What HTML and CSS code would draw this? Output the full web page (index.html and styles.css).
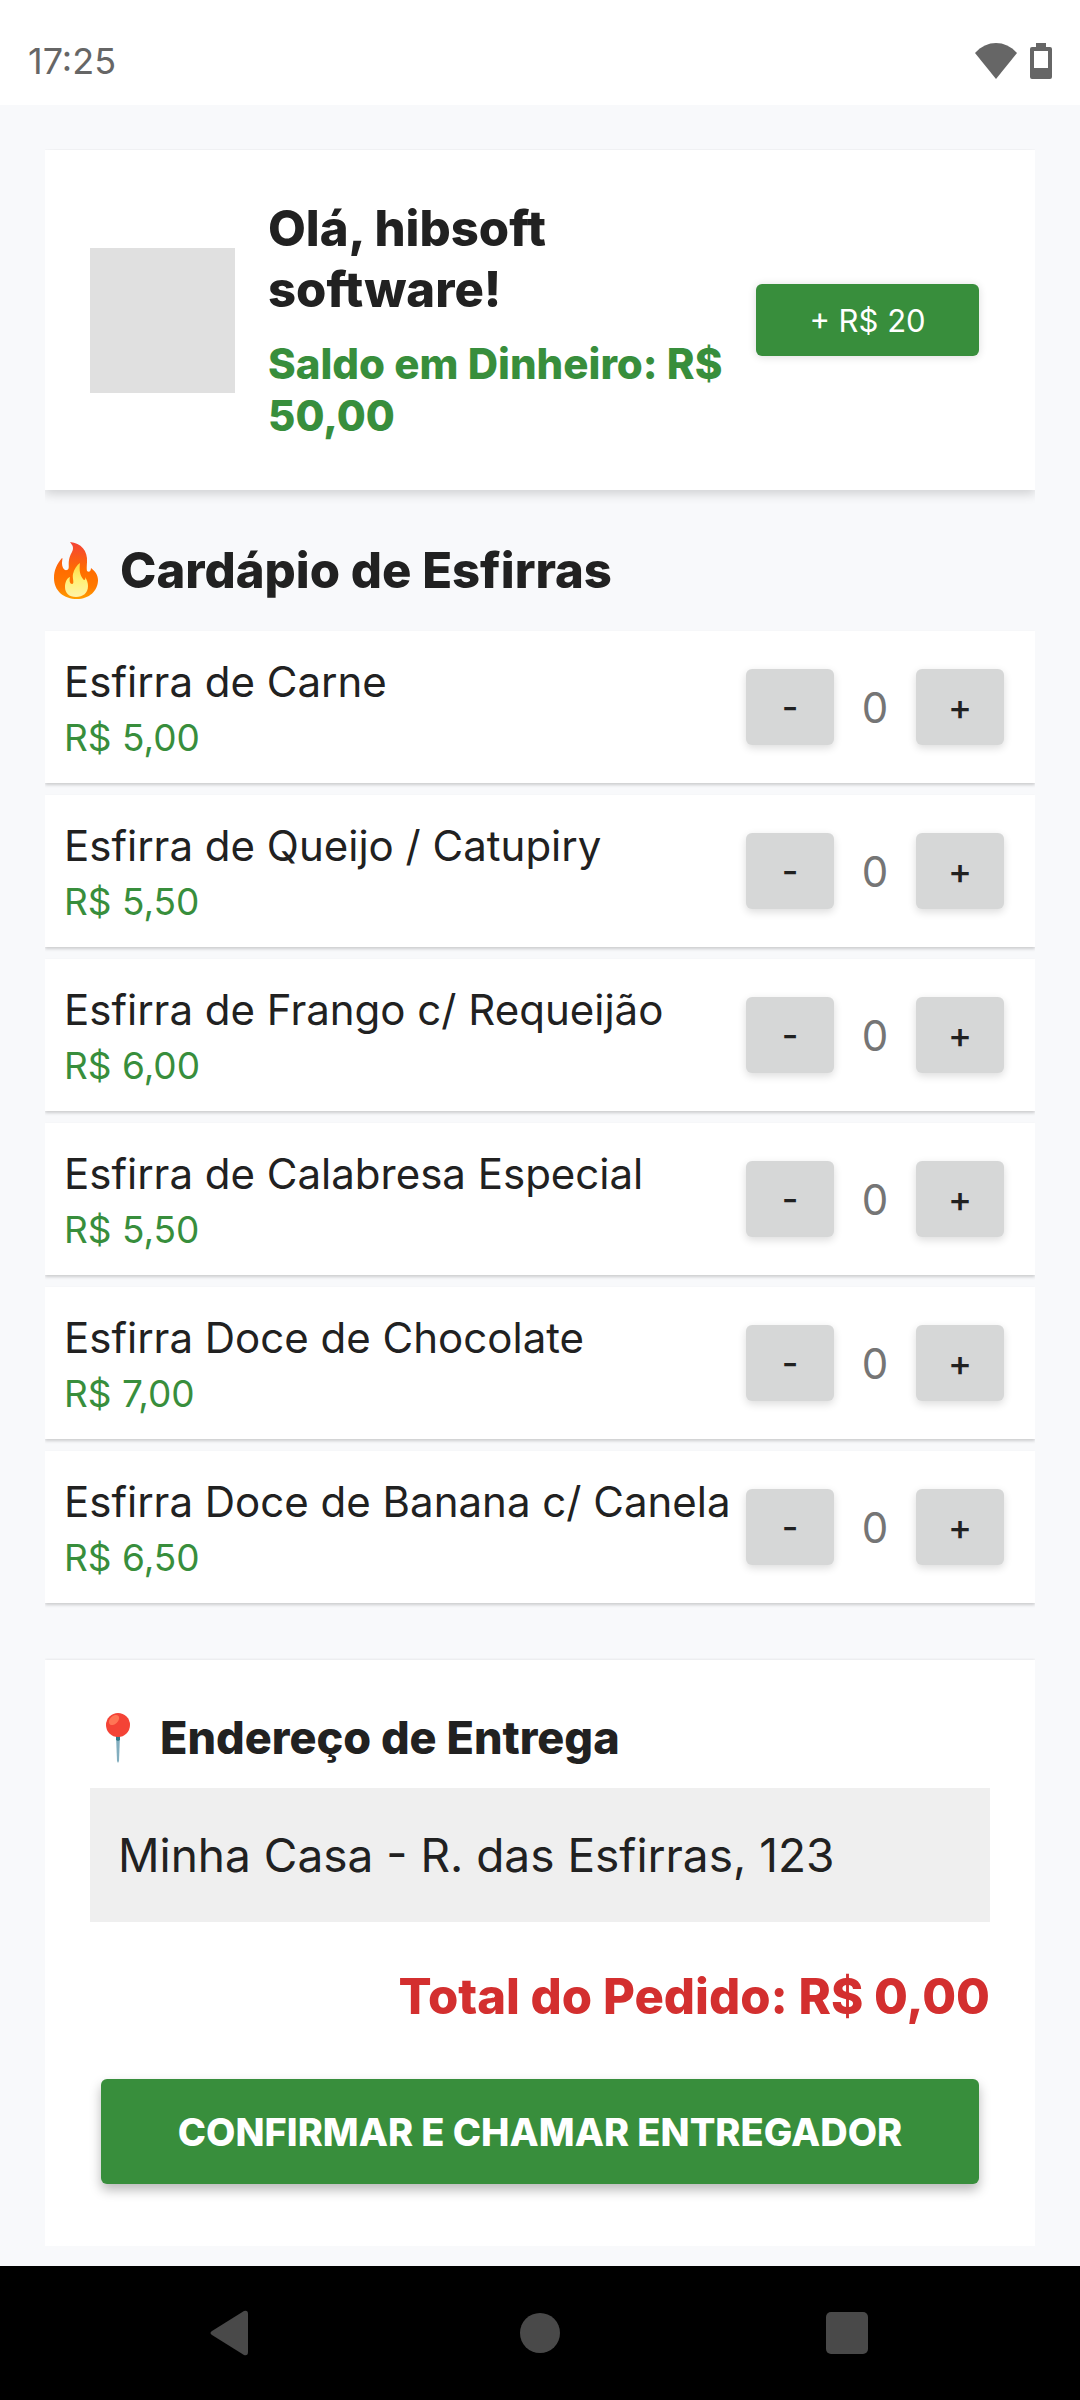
FILE: index.html
```html
<!DOCTYPE html>
<html lang="pt-BR">
<head>
    <meta charset="UTF-8">
    <meta name="viewport" content="width=device-width, initial-scale=1.0">
    <title>Cardápio de Esfirras</title>
    <link rel="stylesheet" href="styles.css">
</head>
<body>
    <header class="status-bar">
        <span>17:25</span>
        <div class="status-icons">
            <svg width="42" height="36" viewBox="0 0 42 36" fill="#666"><path d="M21 36 0 10C12-3.300 30-3.300 42 10Z"/></svg>
            <svg width="22" height="36" viewBox="0 0 22 36" fill="#666"><path fill-rule="evenodd" d="M6 0h10v4h4a2 2 0 0 1 2 2v28a2 2 0 0 1-2 2H2a2 2 0 0 1-2-2V6a2 2 0 0 1 2-2h4ZM4 8v17h14V8Z"/></svg>
        </div>
    </header>

    <main class="container">
        <section class="card profile">
            <div class="avatar"></div>
            <div class="profile-info">
                <h1>Olá, hibsoft software!</h1>
                <p class="balance">Saldo em Dinheiro: R$ 50,00</p>
            </div>
            <button class="btn-green add-balance">+ R$ 20</button>
        </section>

        <h2 class="menu-title">
            <svg width="44" height="57" viewBox="0 0 44 57">
                <defs>
                    <linearGradient id="flame" x1="0" y1="0" x2="0" y2="1">
                        <stop offset="0" stop-color="#f44336"/>
                        <stop offset="0.5" stop-color="#ff6d00"/>
                        <stop offset="0.8" stop-color="#ff7a00"/>
                        <stop offset="1" stop-color="#ffa000"/>
                    </linearGradient>
                    <linearGradient id="core" x1="0" y1="0" x2="0" y2="1">
                        <stop offset="0" stop-color="#ffd740"/>
                        <stop offset="0.5" stop-color="#fff176"/>
                        <stop offset="1" stop-color="#fff3a8"/>
                    </linearGradient>
                </defs>
                <path fill="url(#flame)" d="M16 0c11 1 18 9 17 20-.200 4-.500 7 0 9 2 2 4 0 4-3 4 3 7 7 7 12 0 11-9 19-21 19C10 57 0 49 0 36c0-8 3-14 8-20 1 0 0 2 0 5 0 4 2 8 5 7 3-1 1-5 2-10 1-6 4-8 4-12 0-3-2-4-3-6Z"/>
                <path fill="url(#core)" d="M26 21c-1 8 0 12 3 16 1 2 3 1 2-2 2 3 3 6 3 9 0 7-5 11-12 11S11 51 11 45c0-5 2-9 5-10-1 4 0 7 2 7 3 0 0-6 1-10 1-5 4-9 7-11Z"/>
            </svg>
            Cardápio de Esfirras
        </h2>

        <ul class="menu">
            <li class="item">
                <div class="item-info">
                    <h3>Esfirra de Carne</h3>
                    <p>R$ 5,00</p>
                </div>
                <button class="qty-btn">-</button>
                <span class="qty">0</span>
                <button class="qty-btn">+</button>
            </li>
            <li class="item">
                <div class="item-info">
                    <h3>Esfirra de Queijo / Catupiry</h3>
                    <p>R$ 5,50</p>
                </div>
                <button class="qty-btn">-</button>
                <span class="qty">0</span>
                <button class="qty-btn">+</button>
            </li>
            <li class="item">
                <div class="item-info">
                    <h3>Esfirra de Frango c/ Requeijão</h3>
                    <p>R$ 6,00</p>
                </div>
                <button class="qty-btn">-</button>
                <span class="qty">0</span>
                <button class="qty-btn">+</button>
            </li>
            <li class="item">
                <div class="item-info">
                    <h3>Esfirra de Calabresa Especial</h3>
                    <p>R$ 5,50</p>
                </div>
                <button class="qty-btn">-</button>
                <span class="qty">0</span>
                <button class="qty-btn">+</button>
            </li>
            <li class="item">
                <div class="item-info">
                    <h3>Esfirra Doce de Chocolate</h3>
                    <p>R$ 7,00</p>
                </div>
                <button class="qty-btn">-</button>
                <span class="qty">0</span>
                <button class="qty-btn">+</button>
            </li>
            <li class="item">
                <div class="item-info">
                    <h3>Esfirra Doce de Banana c/ Canela</h3>
                    <p>R$ 6,50</p>
                </div>
                <button class="qty-btn">-</button>
                <span class="qty">0</span>
                <button class="qty-btn">+</button>
            </li>
        </ul>

        <section class="card checkout">
            <label class="address-label" for="address">
                <svg width="24" height="50" viewBox="0 0 24 50">
                    <path fill="#82aebf" d="M10 22h4l-1 26-1 2-1-2Z"/>
                    <path fill="#2f7889" d="M10 22h4v5l-2 1-2-1Z"/>
                    <circle cx="12" cy="12" r="12" fill="#f44336"/>
                    <ellipse cx="8" cy="7" rx="6" ry="4" fill="#ff7555" transform="rotate(-45 8 7)"/>
                </svg>
                Endereço de Entrega
            </label>
            <input class="address" id="address" type="text" value="Minha Casa - R. das Esfirras, 123">
            <p class="total">Total do Pedido: R$ 0,00</p>
            <button class="btn-green confirm">CONFIRMAR E CHAMAR ENTREGADOR</button>
        </section>
    </main>

    <nav class="nav-bar">
        <button aria-label="Voltar">
            <svg width="48" height="48" viewBox="0 0 48 48"><path d="M3 22 35 2q4-1 4 3v38q0 4-4 3L3 26q-3-2 0-4Z"/></svg>
        </button>
        <button aria-label="Início">
            <svg width="48" height="48" viewBox="0 0 48 48"><circle cx="24" cy="24" r="20"/></svg>
        </button>
        <button aria-label="Recentes">
            <svg width="48" height="48" viewBox="0 0 48 48"><rect x="3" y="3" width="42" height="42" rx="5"/></svg>
        </button>
    </nav>
</body>
</html>
```

FILE: styles.css
```css
* {
    margin: 0;
    padding: 0;
    box-sizing: border-box;
}

body {
    font-family: Inter, 'Open Sans', sans-serif;
    background: #f8f9fb;
    color: #212121;
    min-height: 100vh;
    display: flex;
    flex-direction: column;
}

button {
    font-family: inherit;
    border: none;
    cursor: pointer;
}

svg {
    display: block;
    flex-shrink: 0;
}

.status-bar {
    display: flex;
    align-items: center;
    justify-content: space-between;
    height: 105px;
    padding: 16px 28px 0;
    background: white;
    color: #666;
    font-size: 36px;
}

.status-icons {
    display: flex;
    gap: 13px;
}

.container {
    flex: 1;
    padding: 45px 45px 20px;
}

/* shadows only show above and below the cards */
.card,
.item {
    background: white;
    clip-path: inset(-1px 0 -20px);
}

.profile {
    display: flex;
    align-items: center;
    padding: 48px 45px;
    box-shadow: 0 4px 10px rgba(0, 0, 0, 0.16);
}

.avatar {
    width: 145px;
    height: 145px;
    flex-shrink: 0;
    background: #e0e0e0;
}

.profile-info {
    flex: 1;
    padding-left: 33px;
}

h1,
.menu-title {
    font-size: 49px;
    line-height: 61px;
    font-weight: 800;
}

.balance {
    margin-top: 18px;
    color: #388e3c;
    font-size: 42px;
    line-height: 52px;
    font-weight: 800;
}

.btn-green {
    background: #388e3c;
    color: white;
    border-radius: 6px;
}

.add-balance {
    width: 223px;
    height: 72px;
    flex-shrink: 0;
    margin-right: 11px;
    font-size: 31px;
    box-shadow: 0 1px 8px rgba(0, 0, 0, 0.14);
}

.menu-title {
    display: flex;
    align-items: center;
    gap: 22px;
    margin: 50px 0 30px;
    padding-left: 9px;
}

.menu {
    display: grid;
    gap: 12px;
    list-style: none;
}

.item {
    display: flex;
    align-items: center;
    padding: 20px 31px 20px 19px;
    box-shadow: 0 2px 3px rgba(0, 0, 0, 0.18);
}

.item-info {
    flex: 1;
}

.item-info h3 {
    font-size: 42px;
    line-height: 62px;
    font-weight: 400;
    white-space: nowrap;
}

.item-info p {
    color: #388e3c;
    font-size: 37px;
    line-height: 50px;
}

.qty-btn {
    width: 88px;
    height: 76px;
    flex-shrink: 0;
    background: #d6d7d7;
    color: #212121;
    border-radius: 6px;
    font-size: 36px;
    font-weight: 500;
    box-shadow: 0 3px 8px rgba(0, 0, 0, 0.14);
}

.qty {
    width: 82px;
    flex-shrink: 0;
    color: #757575;
    font-size: 42px;
    text-align: center;
}

.checkout {
    margin-top: 57px;
    padding: 45px 45px 62px;
    box-shadow: 0 0 3px rgba(0, 0, 0, 0.12);
    clip-path: inset(-2px 0 0);
}

.address-label {
    display: flex;
    align-items: center;
    gap: 30px;
    padding-left: 16px;
    font-size: 45px;
    line-height: 66px;
    font-weight: 800;
}

.address {
    display: block;
    width: 100%;
    height: 134px;
    margin-top: 17px;
    padding: 0 28px;
    background: #efefef;
    border: none;
    color: #212121;
    font-family: inherit;
    font-size: 46px;
}

.total {
    margin-top: 44px;
    color: #d32f2f;
    font-size: 49px;
    line-height: 61px;
    font-weight: 800;
    text-align: right;
}

.confirm {
    display: block;
    width: calc(100% - 22px);
    height: 105px;
    margin: 52px 11px 0;
    font-size: 38px;
    font-weight: 800;
    box-shadow: 0 6px 12px rgba(0, 0, 0, 0.28);
}

.nav-bar {
    display: grid;
    grid-template-columns: repeat(3, 1fr);
    align-items: center;
    justify-items: center;
    height: 134px;
    padding: 0 80px;
    background: black;
}

.nav-bar button {
    background: none;
    fill: #494949;
}
```
